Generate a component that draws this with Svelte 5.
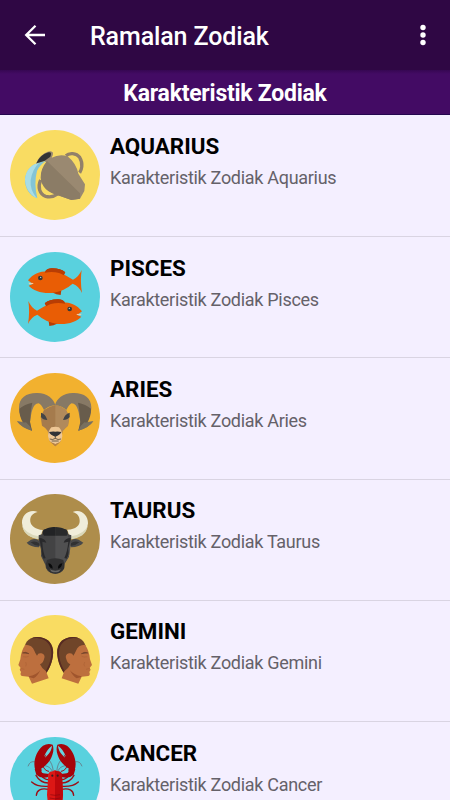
<script>
  const signs = ['Aquarius', 'Pisces', 'Aries', 'Taurus', 'Gemini', 'Cancer'];
  const backgrounds = {
    Aquarius: '#f9dc62',
    Pisces: '#59d1de',
    Aries: '#f2b12f',
    Taurus: '#ae8d4b',
    Gemini: '#f9dc62',
    Cancer: '#59d1de'
  };
</script>

{#snippet fish()}
  <path d="M135 95Q139 84 154 84Q179 83 196 96L191 106L137 101Z" fill="#b83d04" />
  <path d="M151 155Q166 153 184 150L182 164Q168 162 159 157Z" fill="#b83d04" />
  <path d="M84 120C99 101 120 92 148 93C178 92 198 106 219 118Q236 110 245 89Q240 121 246 158Q238 138 218 130C202 143 183 155 154 158C125 160 99 150 86 136L98 131Z" fill="#e95d05" />
  <path d="M134 97Q140 85 154 84Q180 83 195 95L191 105Q171 91 134 97Z" fill="#b83d04" />
  <path d="M85 127L101 128L98 131L88 132Z" fill="#f5c9a3" />
  <circle cx="121" cy="113" r="7" fill="#343a3a" />
  <circle cx="122" cy="111" r="2" fill="#d8e0dd" />
{/snippet}

{#snippet horn()}
  <path d="M166 130C162 111 142 93 112 93C80 92 57 107 57 137C57 155 64 169 73 180L51 178Q64 197 96 206Q91 193 90 180C94 155 97 124 116 124Q123 126 132 144Q144 132 166 130Z" fill="#877965" />
  <path d="M58 140Q74 127 97 122C92 143 92 164 90 180L96 206Q86 201 78 195L69 182C62 169 57 154 58 140Z" fill="#685c4c" />
  <path d="M51 178Q65 182 78 181Q90 190 96 206Q66 199 51 178Z" fill="#79705f" />
{/snippet}

{#snippet face()}
  <path d="M75 121C81 101 99 96 113 96C137 97 155 109 159 134C162 158 150 190 139 204L101 174Z" fill="#704529" />
  <path d="M88 103Q99 96 113 96C137 97 155 109 159 134C162 158 150 190 139 204L137 198C148 181 157 154 153 134C149 112 132 101 111 99Q98 99 88 103Z" fill="#562a22" />
  <path d="M76 119Q97 119 103 137Q106 145 111 152Q114 143 124 145Q138 149 132 163Q129 175 120 178Q125 190 138 199L146 220L96 236L86 215L66 213Q59 210 63 201L59 194L62 189L55 180L61 163Q63 137 76 119Z" fill="#bd6f3e" />
  <path d="M86 214Q110 210 121 196Q113 213 101 220L89 217Z" fill="#a0552d" />
  <path d="M67 144Q76 139 87 146Q75 144 67 144Z" fill="#70422a" stroke="#70422a" stroke-width="1.5" />
  <path d="M69 155Q78 158 86 154M61 190L73 193M77 171Q81 179 77 184" fill="none" stroke="#a35a33" stroke-width="1.2" />
{/snippet}

{#snippet lobsterSide()}
  <g fill="none" stroke="#9b1017" stroke-width="4" stroke-linecap="round">
    <path d="M145 193Q132 192 124 180L116 177" />
    <path d="M145 203Q120 202 108 180" />
    <path d="M145 213Q111 215 95 200" />
    <path d="M145 222Q111 216 109 240" />
    <path d="M146 168Q133 166 129 152" stroke-width="3" />
  </g>
  <path d="M145 185Q123 191 109 178L104 162L116 158L126 163Q121 170 130 174L147 176Z" fill="#a60409" />
  <path d="M106 164C98 143 107 108 129 91Q143 83 158 88Q163 103 157 119C151 139 137 151 121 162Z" fill="#a60409" />
  <path d="M156 91Q141 101 132 124L139 117L135 127L143 119Q155 106 156 91Z" fill="#66d5df" />
  <path d="M106 140Q90 135 84 153M160 170Q158 145 146 133M157 168Q150 153 134 151" fill="none" stroke="#733d46" stroke-width="1.5" />
{/snippet}

<div class="screen">
  <header>
    <button class="back" aria-label="Back">
      <svg width="24" height="24" viewBox="0 0 24 24"><path d="M22 12H3M12.5 2.8L3.2 12L12.5 21.2" fill="none" stroke="#fff" stroke-width="2.3" /></svg>
    </button>
    <h1>Ramalan Zodiak</h1>
    <button class="more" aria-label="More options">
      <svg width="8" height="24" viewBox="0 0 8 24" fill="#fff"><circle cx="4" cy="4.5" r="2.7" /><circle cx="4" cy="12" r="2.7" /><circle cx="4" cy="19.5" r="2.7" /></svg>
    </button>
  </header>
  <h2>Karakteristik Zodiak</h2>
  <main>
    {#each signs as sign}
      <article>
        <div class="avatar" style:background={backgrounds[sign]}>
          {#if sign === 'Aquarius'}
            <svg viewBox="30 30 270 270">
              <path d="M198 107C207 98 229 98 239 112C251 132 244 151 239 158M122 180C112 201 119 223 137 229Q157 234 173 222" fill="none" stroke="#92806a" stroke-width="10" />
              <path d="M108 131Q122 123 139 123Q120 133 111 153Q101 190 112 235C88 228 74 202 75 178C77 154 93 135 108 131Z" fill="#83c4d6" />
              <path d="M108 131C90 137 77 155 75 178C76 203 88 224 111 235Q89 210 92 181Q96 149 119 126Z" fill="#a9dde6" />
              <path d="M108 131Q117 107 141 96Q155 90 159 98Q160 104 155 113Q177 101 202 108Q229 130 235 161L255 193L253 213L240 236L214 240L178 227Q137 216 124 182Q119 153 140 128L133 122Z" fill="#9a8971" />
              <path d="M141 123L240 220L240 236L214 240L178 227C144 218 124 201 122 173Q121 147 141 123Z" fill="#8b7c66" />
              <path d="M109 130Q120 104 146 97Q157 96 151 110L133 123Z" fill="#333435" />
            </svg>
          {:else if sign === 'Pisces'}
            <svg viewBox="30 35 270 270">
              {@render fish()}
              <g transform="translate(330 93)"><g transform="scale(-1 1)">{@render fish()}</g></g>
            </svg>
          {:else if sign === 'Aries'}
            <svg viewBox="30 33 270 270">
              {@render horn()}
              <g transform="translate(331 0) scale(-1 1)">{@render horn()}</g>
              <path d="M166 129Q151 132 132 144L122 164L126 191Q136 196 143 207L149 238L166 253L182 238L188 207Q195 198 204 191L208 164L198 144Q181 132 166 129Z" fill="#a57b4d" />
              <path d="M166 129Q182 132 198 144L208 164L204 191Q195 198 188 207H166Z" fill="#b18a5c" />
              <path d="M154 196Q166 193 177 196Q186 205 187 222Q186 235 179 241L166 247L153 241Q145 234 144 222Q145 205 154 196Z" fill="#edc695" />
              <path d="M151 240L166 246L181 240L166 253Z" fill="#b98443" />
              <path d="M123 152Q137 156 142 174Q128 174 123 165ZM209 152Q194 156 189 174Q203 174 209 165Z" fill="#424447" />
              <path d="M147 210Q157 208 166 209Q175 208 184 210Q180 219 166 224Q151 219 147 210Z" fill="#303236" />
              <path d="M166 219V230M149 231Q158 235 166 229Q174 235 183 231M155 237H176" fill="none" stroke="#45413a" stroke-width="2.3" />
            </svg>
          {:else if sign === 'Taurus'}
            <svg viewBox="30 30 270 270">
              <path d="M113 84C87 74 65 94 66 117C68 151 97 163 119 165L128 138C107 136 93 126 91 113C89 96 98 88 113 84ZM218 84C244 74 264 94 264 118C261 151 233 163 211 165L202 137C228 136 240 123 239 110C239 96 231 88 218 84Z" fill="#f0edda" />
              <path d="M67 125Q76 149 116 157L119 165C93 163 70 151 67 125ZM263 125Q254 149 214 157L211 165C238 163 260 151 263 125Z" fill="#d9d7b8" />
              <path d="M122 178Q113 159 93 167L80 176Q91 189 117 190ZM208 178Q216 159 236 167L250 176Q239 189 213 190Z" fill="#48494a" />
              <path d="M119 179Q106 169 92 175Q104 186 118 185ZM211 179Q224 169 238 175Q226 186 212 185Z" fill="#303132" />
              <path d="M130 137Q165 122 200 137L205 151L214 154L213 177Q206 196 207 218L194 239Q196 266 166 270Q136 266 136 242L123 216Q126 195 116 177L116 154L126 151Z" fill="#434344" />
              <path d="M166 151H201L213 177L208 213L194 236H166Z" fill="#505051" />
              <path d="M132 137Q149 127 166 129V155H132Q124 144 132 137Z" fill="#222325" />
              <path d="M166 129Q185 129 199 137Q206 145 200 155H166Z" fill="#292a2b" />
              <path d="M117 162Q134 162 139 176L127 173Q128 203 137 222L131 224Q123 211 125 195ZM212 162Q195 162 191 176L205 173Q202 203 193 222L200 224Q208 211 205 195Z" fill="#29292b" />
              <path d="M141 228Q166 217 190 228Q195 239 192 254L181 265Q166 273 149 264L139 252Q136 239 141 228Z" fill="#303031" />
              <path d="M145 238Q158 240 158 254Q146 252 145 238ZM187 238Q173 240 174 254Q185 252 187 238Z" fill="#090a0b" />
              <path d="M149 256Q166 264 183 256L176 263Q166 267 155 263Z" fill="#656565" />
            </svg>
          {:else if sign === 'Gemini'}
            <svg viewBox="30 30 270 270">
              {@render face()}
              <g transform="translate(331 0) scale(-1 1)">{@render face()}</g>
            </svg>
          {:else}
            <svg viewBox="30 65 270 270">
              {@render lobsterSide()}
              <g transform="translate(330 0) scale(-1 1)">{@render lobsterSide()}</g>
              <path d="M145 175Q149 167 159 168L165 164L171 168Q183 168 186 177L189 239L185 275L165 320L145 275L141 239Z" fill="#dc1715" />
              <path d="M165 167Q184 166 186 177L189 239L185 275L165 320Z" fill="#bd080c" />
              <path d="M151 238Q165 242 180 238M149 248Q165 253 182 248" fill="none" stroke="#8b090d" stroke-width="2" />
              <circle cx="157" cy="181" r="3.2" fill="#331d20" /><circle cx="173" cy="181" r="3.2" fill="#331d20" />
            </svg>
          {/if}
        </div>
        <div class="copy">
          <h3>{sign.toUpperCase()}</h3>
          <p>Karakteristik Zodiak {sign}</p>
        </div>
      </article>
    {/each}
  </main>
</div>

<style>
  :global(body) { margin: 0; overflow: hidden; }
  .screen { width: 450px; height: 800px; overflow: hidden; background: #f4efff; font-family: Roboto, sans-serif; }
  h1, h2, h3, p { margin: 0; }
  header { display: flex; align-items: center; box-sizing: border-box; height: 70px; padding: 0 23px 0 23px; background: #2f0744; }
  button { display: flex; padding: 0; border: 0; background: none; }
  .back { width: 67px; }
  h1 { flex: 1; padding-top: 3px; color: #fff; font-size: 25px; font-weight: 500; line-height: 30px; letter-spacing: -0.12px; white-space: nowrap; }
  .more { width: 8px; }
  h2 { box-sizing: border-box; height: 45px; padding-top: 3px; border-bottom: 1px solid #24064f; color: #fff; background: linear-gradient(#360752 0, #430b64 4px); font-size: 23px; font-weight: 700; line-height: 42px; letter-spacing: -0.25px; text-align: center; }
  main { padding-top: 0.8px; }
  article { display: flex; box-sizing: border-box; height: 121.25px; padding: 14.7px 10px 0; gap: 10px; border-bottom: 1.5px solid #d9d4e2; }
  .avatar { flex: 0 0 90px; height: 90px; overflow: hidden; border-radius: 50%; }
  svg { display: block; }
  .avatar svg { width: 90px; height: 90px; }
  h3 { padding-top: 2px; color: #000; font-size: 22.4px; font-weight: 700; line-height: 28px; }
  p { margin-top: 6px; color: #656169; font-size: 18px; line-height: 24px; letter-spacing: -0.3px; white-space: nowrap; }
</style>
